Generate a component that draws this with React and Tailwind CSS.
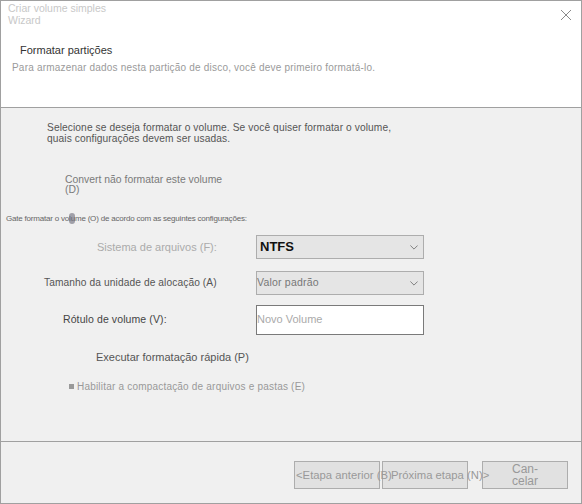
export default function App() {
  const font = { fontFamily: '"Liberation Sans", Arial, sans-serif' };
  return (
    <div
      style={font}
      className="w-[582px] h-[504px] bg-[#f0f0f0] border border-[#a0a0a0] flex flex-col overflow-hidden"
    >
      {/* header */}
      <div className="relative h-[107px] shrink-0 bg-white border-b border-[#a0a0a0]">
        <div className="pl-[7px] pt-[1px] text-[10.5px] leading-[12px] text-[#c8c8c8]">
          <div>Criar volume simples</div>
          <div>Wizard</div>
        </div>
        <button className="absolute right-[9px] top-[8px] w-[12px] h-[12px] text-[#8a8a8a]">
          <svg viewBox="0 0 12 12" className="w-full h-full" stroke="currentColor" strokeWidth="1" fill="none">
            <path d="M1 1 L11 11 M11 1 L1 11" />
          </svg>
        </button>
        <div className="pl-[19px] mt-[17px] text-[11px] leading-[14px] text-[#333]">Formatar partições</div>
        <div className="pl-[11px] mt-[5px] text-[10px] leading-[12px] tracking-[0.2px] text-[#9a9a9a]">
          Para armazenar dados nesta partição de disco, você deve primeiro formatá-lo.
        </div>
      </div>

      {/* body */}
      <div className="flex-1 relative">
        <div className="pl-[46px] pt-[14px] text-[10.2px] leading-[11px] tracking-[0.1px] text-[#555]">
          <div>Selecione se deseja formatar o volume. Se você quiser formatar o volume,</div>
          <div>quais configurações devem ser usadas.</div>
        </div>

        <div className="pl-[64px] mt-[31px] text-[10.4px] leading-[10px] text-[#7a7a7a]">
          <div>Convert não formatar este volume</div>
          <div>(D)</div>
        </div>

        <div className="relative pl-[5px] mt-[19px] text-[8px] leading-[10px] tracking-[-0.2px] text-[#666]">
          Gate formatar o volume (O) de acordo com as seguintes configurações:
          <span className="absolute left-[68px] top-[-1px] w-[6px] h-[11px] rounded-sm bg-[#6a6a7a] opacity-60" />
        </div>

        <div className="mt-[11px] flex flex-col gap-[12px]">
          <div className="flex items-center">
            <div className="w-[255px] pl-[96px] text-[11px] text-[#ababab]">Sistema de arquivos (F):</div>
            <div className="w-[168px] h-[24px] bg-[#e5e5e5] border border-[#adadad] flex items-center justify-between pl-[3px] pr-[5px]">
              <span className="text-[13px] font-bold text-[#111]">NTFS</span>
              <Chevron />
            </div>
          </div>
          <div className="flex items-center">
            <div className="w-[255px] pl-[43px] text-[10.2px] tracking-[0.1px] text-[#555]">Tamanho da unidade de alocação (A)</div>
            <div className="w-[168px] h-[24px] bg-[#e5e5e5] border border-[#adadad] flex justify-between pr-[5px]">
              <span className="text-[10.5px] leading-[20px] tracking-[0.2px] text-[#777]">Valor padrão</span>
              <div className="flex items-center"><Chevron /></div>
            </div>
          </div>
          <div className="flex items-center -mt-[2px]">
            <div className="w-[255px] pl-[62px] text-[10.5px] tracking-[0.1px] text-[#444]">Rótulo de volume (V):</div>
            <div className="w-[168px] h-[30px] bg-white border border-[#7a7a7a]">
              <span className="text-[11px] leading-[22px] text-[#aaa]">Novo Volume</span>
            </div>
          </div>
        </div>

        <div className="pl-[95px] mt-[14px] text-[11px] text-[#555]">Executar formatação rápida (P)</div>
        <div className="pl-[68px] mt-[13px] text-[10px] tracking-[0.2px] text-[#999] flex items-center gap-[3px]">
          <span className="inline-block w-[5px] h-[5px] bg-[#999]" />
          Habilitar a compactação de arquivos e pastas (E)
        </div>
      </div>

      {/* footer */}
      <div className="h-[62px] shrink-0 border-t border-[#a0a0a0] flex items-start pt-[19px] pl-[293px]">
        <FooterButton pad="pl-[1px]">&lt;Etapa anterior (B)</FooterButton>
        <div className="w-[2px]" />
        <FooterButton pad="pl-[8px]">Próxima etapa (N)&gt;</FooterButton>
        <div className="w-[14px]" />
        <FooterButton cancel>Can-<br />celar</FooterButton>
      </div>
    </div>
  );
}

function Chevron() {
  return (
    <svg viewBox="0 0 10 6" className="w-[8px] h-[5px]" fill="none" stroke="#666" strokeWidth="1">
      <path d="M0.5 0.5 L5 5 L9.5 0.5" />
    </svg>
  );
}

function FooterButton({ children, cancel, pad }) {
  if (cancel) {
    return (
      <div className="w-[86px] h-[28px] bg-[#e1e1e1] border border-[#adadad] flex items-center justify-center text-[#999]">
        <span className="text-[12px] leading-[12px] text-center">{children}</span>
      </div>
    );
  }
  return (
    <div className={`w-[86px] h-[28px] bg-[#e1e1e1] border border-[#adadad] flex items-center whitespace-nowrap text-[#999] ${pad}`}>
      <span className="relative z-10 text-[11.3px]">{children}</span>
    </div>
  );
}
